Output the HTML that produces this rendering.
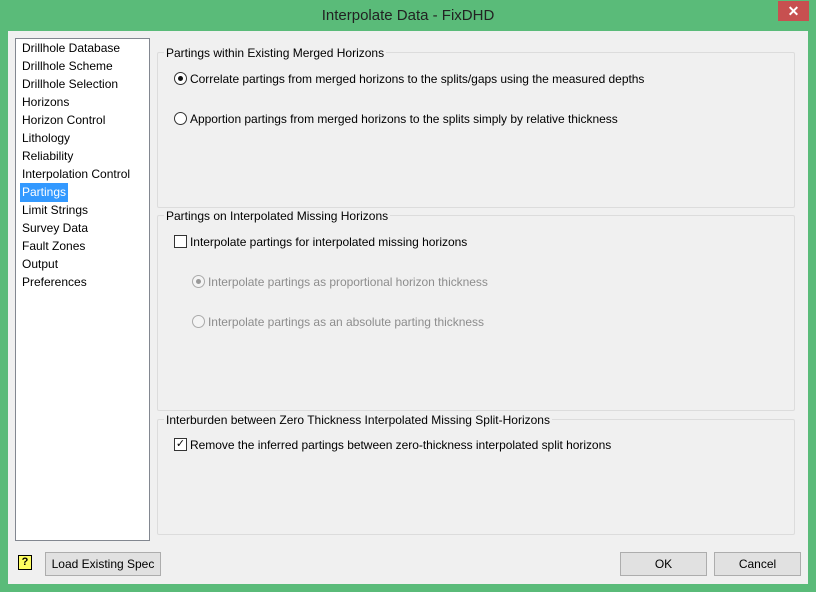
<!DOCTYPE html>
<html><head><style>
body{margin:0;width:816px;height:592px;background:#5abb79;font-family:"Liberation Sans",sans-serif;font-size:12px;color:#000;position:relative;overflow:hidden}
.t{position:absolute;left:0;top:7px;width:816px;text-align:center;font-size:15px;color:#222}
.x{position:absolute;left:778px;top:1px;width:31px;height:20px;background:#c75050;color:#fff;text-align:center;font-size:14px;line-height:20px;font-weight:bold}
.c{position:absolute;left:8px;top:31px;width:800px;height:553px;background:#f0f0f0}
.a{position:absolute;white-space:nowrap;letter-spacing:-0.03px}
.list{position:absolute;left:15px;top:38px;width:133px;height:501px;background:#fff;border:1px solid #828790}
.list div{height:18px;line-height:19px;padding-left:6px}
.sel{background:#3399ff;color:#fff;display:inline-block;padding:0 2px;margin-left:-2px}
.g{position:absolute;border:1px solid #dcdcdc;border-radius:2px}
.gl{position:absolute;background:#f0f0f0;padding:0 2px;white-space:nowrap}
.r{position:absolute;width:11px;height:11px;border:1px solid #333;border-radius:50%;background:#fff}
.r.on::after{content:"";position:absolute;left:3px;top:3px;width:5px;height:5px;border-radius:50%;background:#111}
.r.dis{border-color:#aaa;background:#f4f4f4}
.r.dis.on::after{background:#999}
.cb{position:absolute;width:11px;height:11px;border:1px solid #333;background:#fff}
.btn{position:absolute;border:1px solid #adadad;background:#e1e1e1;text-align:center;line-height:22px;height:22px}
.dim{color:#8d8d8d}
</style></head><body>
<div class="t">Interpolate Data - FixDHD</div>
<div class="x">✕</div>
<div class="c"></div>
<div class="list">
<div>Drillhole Database</div><div>Drillhole Scheme</div><div>Drillhole Selection</div><div>Horizons</div><div>Horizon Control</div><div>Lithology</div><div>Reliability</div><div>Interpolation Control</div><div><span class="sel">Partings</span></div><div>Limit Strings</div><div>Survey Data</div><div>Fault Zones</div><div>Output</div><div>Preferences</div>
</div>

<div class="g" style="left:157px;top:52px;width:636px;height:154px"></div>
<div class="gl" style="left:164px;top:46px">Partings within Existing Merged Horizons</div>
<div class="r on" style="left:174px;top:72px"></div>
<div class="a" style="left:190px;top:72px">Correlate partings from merged horizons to the splits/gaps using the measured depths</div>
<div class="r" style="left:174px;top:112px"></div>
<div class="a" style="left:190px;top:112px">Apportion partings from merged horizons to the splits simply by relative thickness</div>

<div class="g" style="left:157px;top:215px;width:636px;height:194px"></div>
<div class="gl" style="left:164px;top:209px">Partings on Interpolated Missing Horizons</div>
<div class="cb" style="left:174px;top:235px"></div>
<div class="a" style="left:190px;top:235px">Interpolate partings for interpolated missing horizons</div>
<div class="r dis on" style="left:192px;top:275px"></div>
<div class="a dim" style="left:208px;top:275px">Interpolate partings as proportional horizon thickness</div>
<div class="r dis" style="left:192px;top:315px"></div>
<div class="a dim" style="left:208px;top:315px">Interpolate partings as an absolute parting thickness</div>

<div class="g" style="left:157px;top:419px;width:636px;height:114px"></div>
<div class="gl" style="left:164px;top:413px">Interburden between Zero Thickness Interpolated Missing Split-Horizons</div>
<div class="cb" style="left:174px;top:438px;font-size:11px;line-height:11px;text-align:center">✓</div>
<div class="a" style="left:190px;top:438px">Remove the inferred partings between zero-thickness interpolated split horizons</div>

<div style="position:absolute;left:18px;top:555px;width:12px;height:13px;border:1px solid #000;background:#ffff60;font-size:11px;font-weight:bold;text-align:center;line-height:13px">?</div>
<div class="btn" style="left:45px;top:552px;width:114px">Load Existing Spec</div>
<div class="btn" style="left:620px;top:552px;width:85px">OK</div>
<div class="btn" style="left:714px;top:552px;width:85px">Cancel</div>
</body></html>
